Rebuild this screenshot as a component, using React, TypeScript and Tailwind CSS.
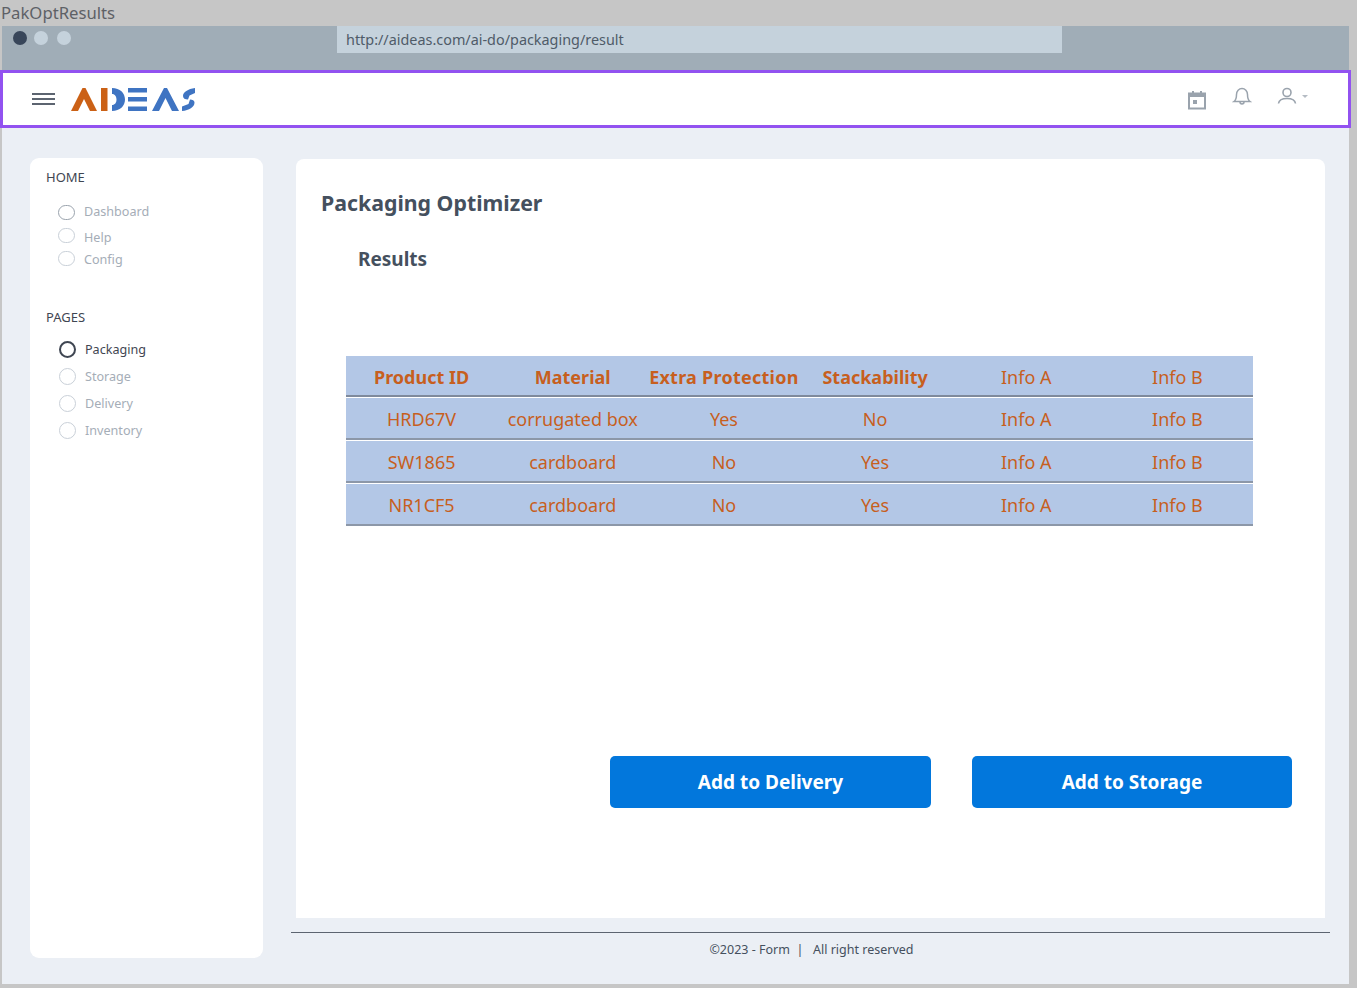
const F = '[font-family:"Noto_Sans",sans-serif]';

function Logo() {
  return (
    <svg width="126" height="26" viewBox="0 0 126 26" className="ml-[15px]">
      <polygon points="1,25 12.500,2 15.500,2 27,25 20,25 14,13 8,25" fill="#cb6116" />
      <rect x="31" y="2" width="6.500" height="23" fill="#cb6116" />
      <path d="M42 2 C50 2 55 7 55 13.500 C55 20 50 25 42 25 L42 19 C45 19 46.500 16.500 46.500 13.500 C46.500 10.500 45 8 42 8 Z" fill="#3f74c2" />
      <rect x="58" y="2" width="19" height="4.500" fill="#3f74c2" />
      <rect x="58" y="11" width="19" height="4.500" fill="#3f74c2" />
      <rect x="58" y="20.500" width="19" height="4.500" fill="#3f74c2" />
      <polygon points="82,25 94,2 97,2 109,25 102,25 95.500,12 89,25" fill="#3f74c2" />
      <path d="M125 2 C118 3 113 6 113 10 C113 12.500 115 13.500 118 13.500 L119.500 9.500 L125 7 Z" fill="#3f74c2" />
      <path d="M112 25 C119 24.500 124.500 21 124.500 16.500 C124.500 14.500 122.500 13.500 120 13.500 L118.500 18 L112 20.500 Z" fill="#3f74c2" />
    </svg>
  );
}

function NavItem({ label, active, gap, x, ring, up }: { label: string; active?: boolean; gap: string; x: string; ring: string; up?: string }) {
  return (
    <div className={`flex items-center ${gap} ${x}`}>
      <span className={`shrink-0 rounded-full ${ring} ${up ?? ""}`} />
      <span className={`text-[12.600px] ${active ? "text-[#3f4652]" : "text-[#a5adb7]"}`}>{label}</span>
    </div>
  );
}

const rows = [
  ["HRD67V", "corrugated box", "Yes", "No", "Info A", "Info B"],
  ["SW1865", "cardboard", "No", "Yes", "Info A", "Info B"],
  ["NR1CF5", "cardboard", "No", "Yes", "Info A", "Info B"],
];
const head = ["Product ID", "Material", "Extra Protection", "Stackability", "Info A", "Info B"];

export default function App() {
  return (
    <div className={`${F} h-[988px] w-[1357px] overflow-hidden bg-[#c6c6c6]`}>
      <div className="h-[26px] pl-[1px] text-[16.700px] leading-[26px] text-[#5e6166]">PakOptResults</div>
      <div className="ml-[2px] flex h-[44px] w-[1347px] bg-[#a0adb7]">
        <div className="ml-[11px] mt-[5px] flex h-[14px]">
          <span className="h-[14px] w-[14px] rounded-full bg-[#38465a]" />
          <span className="ml-[7px] h-[14px] w-[14px] rounded-full bg-[#c5d2dc]" />
          <span className="ml-[9px] h-[14px] w-[14px] rounded-full bg-[#c5d2dc]" />
        </div>
        <div className="ml-[266px] h-[27px] w-[725px] bg-[#c5d2dc] pl-[9px] text-[14.400px] leading-[27px] text-[#4f5b68]">
          http://aideas.com/ai-do/packaging/result
        </div>
      </div>
      <div className="flex h-[58px] w-[1351px] items-center border-[3px] border-[#9252f0] bg-white pl-[29px]">
        <svg width="23" height="12" viewBox="0 0 23 12">
          <rect y="0" width="23" height="2" fill="#5c6470" />
          <rect y="5" width="23" height="2" fill="#5c6470" />
          <rect y="10" width="23" height="2" fill="#5c6470" />
        </svg>
        <Logo />
        <div className="ml-auto mr-[40px] flex items-start">
          <svg width="20" height="20" viewBox="0 0 20 20" className="mt-[2px]">
            <rect x="2" y="3.500" width="16" height="15" fill="none" stroke="#9aa3ad" strokeWidth="2" />
            <rect x="2" y="3" width="16" height="4" fill="#9aa3ad" />
            <rect x="5" y="1" width="2" height="4" fill="#9aa3ad" />
            <rect x="13" y="1" width="2" height="4" fill="#9aa3ad" />
            <rect x="6" y="10" width="4" height="4" fill="#9aa3ad" />
          </svg>
          <svg width="20" height="20" viewBox="0 0 20 20" className="ml-[25px] -mt-[2px]" fill="none" stroke="#9aa3ad" strokeWidth="1.500">
            <path d="M2 15.500 C4 14 4.500 12 4.500 8.500 C4.500 5 7 2.500 10 2.500 C13 2.500 15.500 5 15.500 8.500 C15.500 12 16 14 18 15.500 Z" />
            <path d="M8 16 C8 18.500 12 18.500 12 16" />
          </svg>
          <svg width="20" height="20" viewBox="0 0 20 20" className="ml-[25px] -mt-[2px]" fill="none" stroke="#9aa3ad" strokeWidth="1.600">
            <circle cx="10" cy="6.500" r="4" />
            <path d="M1.500 17.500 C2 13.500 6 12.500 10 12.500 C14 12.500 18 13.500 18.500 17.500" />
          </svg>
          <span className="ml-[5px] mt-[7px] h-0 w-0 border-x-[3.500px] border-t-[3.500px] border-x-transparent border-t-[#b5bcc4]" />
        </div>
      </div>
      <div className="ml-[2px] flex h-[856px] w-[1347px] bg-[#ebeff5] pl-[28px]">
        <aside className="mt-[30px] h-[800px] w-[233px] rounded-[9px] bg-white pl-[16px] pt-[10px]">
          <div className="text-[13px] leading-[18px] text-[#3f4652]">HOME</div>
          <div className="mt-[17px] flex flex-col">
            <div className="h-[26px]"><NavItem label="Dashboard" gap="gap-[9px]" x="ml-[12px]" ring="h-[15px] w-[17px] border-[1.500px] border-[#9aa3ad]" /></div>
            <div className="h-[22px]"><NavItem label="Help" gap="gap-[9px]" x="ml-[12px]" ring="h-[15px] w-[17px] border-[1.500px] border-[#c9d0d8]" up="-mt-[6px]" /></div>
            <div className="h-[23px]"><NavItem label="Config" gap="gap-[9px]" x="ml-[12px]" ring="h-[15px] w-[17px] border-[1.500px] border-[#c9d0d8]" up="-mt-[4px]" /></div>
          </div>
          <div className="mt-[34px] text-[13px] leading-[18px] text-[#3f4652]">PAGES</div>
          <div className="mt-[15px] flex flex-col">
            <div className="h-[27px]"><NavItem label="Packaging" active gap="gap-[9px]" x="ml-[13px]" ring="h-[17px] w-[17px] border-2 border-[#3f4652]" up="-mt-[2px]" /></div>
            <div className="h-[27px]"><NavItem label="Storage" gap="gap-[9px]" x="ml-[13px]" ring="h-[17px] w-[17px] border-[1.500px] border-[#c9d0d8]" up="-mt-[2px]" /></div>
            <div className="h-[27px]"><NavItem label="Delivery" gap="gap-[9px]" x="ml-[13px]" ring="h-[17px] w-[17px] border-[1.500px] border-[#c9d0d8]" up="-mt-[2px]" /></div>
            <div className="h-[27px]"><NavItem label="Inventory" gap="gap-[9px]" x="ml-[13px]" ring="h-[17px] w-[17px] border-[1.500px] border-[#c9d0d8]" up="-mt-[2px]" /></div>
          </div>
        </aside>
        <div className="ml-[28px] flex w-[1039px] flex-col">
          <main className="ml-[5px] mt-[31px] h-[759px] w-[1029px] rounded-t-[8px] bg-white pl-[25px] pt-[28px]">
            <h1 className="text-[21.300px] font-bold leading-[32px] text-[#45505e]">Packaging Optimizer</h1>
            <h2 className="ml-[37px] mt-[27px] text-[19px] font-bold leading-[26px] text-[#45505e]">Results</h2>
            <div className="ml-[25px] mt-[84px] w-[907px] text-center text-[18px] text-[#c75f1e]">
              <div className="grid h-[41px] grid-cols-6 items-center border-b-2 border-[#7f8a9c] bg-[#b3c7e6] pt-[4px] font-bold">
                {head.map((h, i) => (
                  <div key={h} className={i > 3 ? "font-normal" : i === 2 ? "tracking-[0.25px]" : ""}>{h}</div>
                ))}
              </div>
              {rows.map((r, ri) => (
                <div key={ri} className="mt-[1px] grid h-[42px] grid-cols-6 items-center border-b-2 border-[#8c97a8] bg-[#b3c7e6] pt-[2px]">
                  {r.map((c, i) => (
                    <div key={i}>{c}</div>
                  ))}
                </div>
              ))}
            </div>
            <div className="ml-[289px] mt-[230px] flex gap-[41px]">
              <button className="h-[52px] w-[321px] rounded-[5px] bg-[#0277dc] text-[19px] font-bold text-white">Add to Delivery</button>
              <button className="h-[52px] w-[320px] rounded-[5px] bg-[#0277dc] text-[19px] font-bold text-white">Add to Storage</button>
            </div>
          </main>
          <footer className="mt-[14px] border-t border-[#5c6470] pt-[8px] pl-[2px] text-center text-[12.500px] leading-[18px] text-[#45505e]">
            ©2023 - Form&nbsp; |&nbsp;&nbsp; All right reserved
          </footer>
        </div>
      </div>
    </div>
  );
}
